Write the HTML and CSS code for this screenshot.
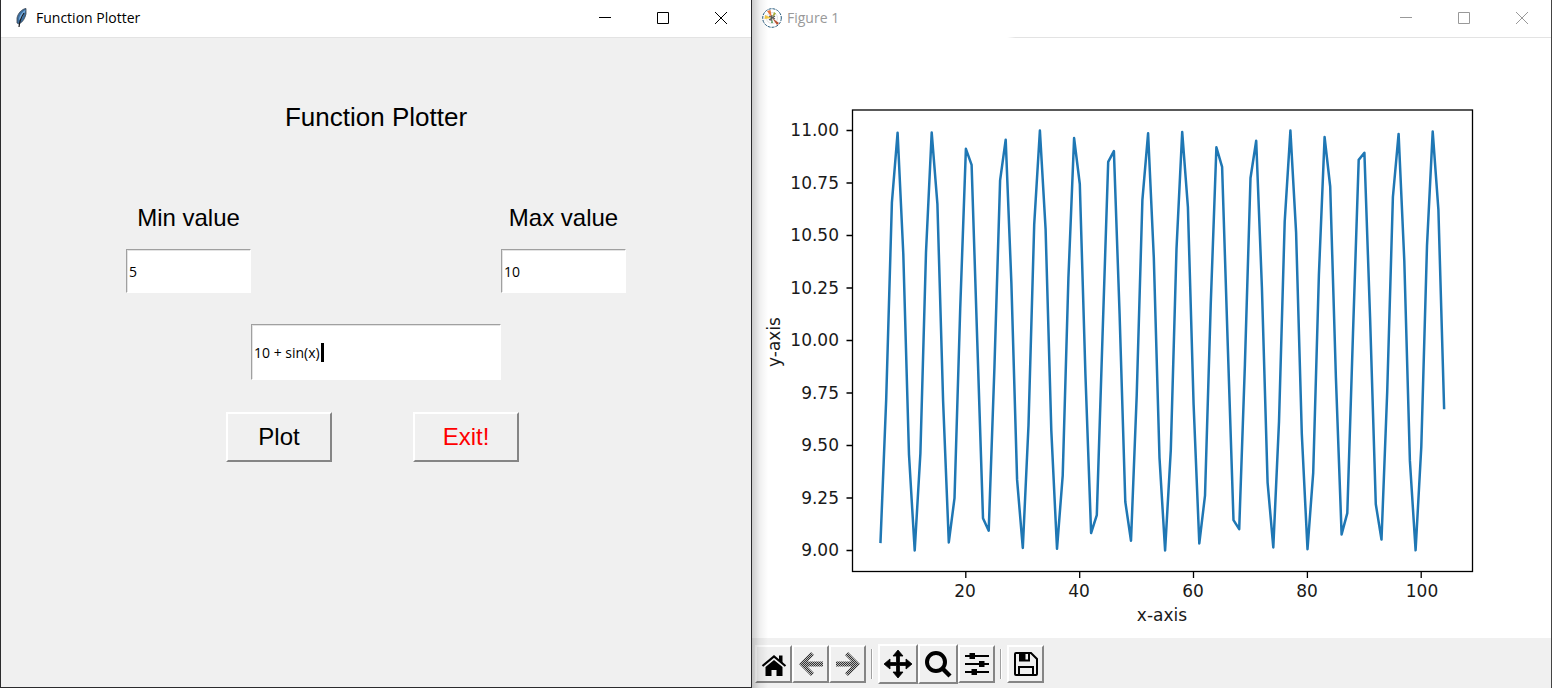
FILE: index.html
```html
<!DOCTYPE html>
<html lang="en">
<head>
<meta charset="utf-8">
<title>Function Plotter</title>
<link rel="stylesheet" href="styles.css">
</head>
<body>
<main class="desktop">
  <section class="window window-form">
    <header class="titlebar">
      <svg class="app-icon" viewBox="0 0 20 20" aria-hidden="true">
        <path d="M15 .5C11 1 7 5 6 10L6 15L8 16C12 14 14 10 15 6Z" fill="#3d6f9f" stroke="#3a4450" stroke-width=".8"/>
        <path d="M14.500 2C11 4 8 8 8 12L11 10L13.500 5Z" fill="#78aee2"/>
        <path d="M13 5C11 8 8.500 12 8 19" fill="none" stroke="#17191d" stroke-width="1.200"/>
      </svg>
      <h2 class="caption">Function Plotter</h2>
      <div class="controls">
        <button class="control" aria-label="Minimize"><svg viewBox="0 0 12 12"><path d="M0 5.500H12"/></svg></button>
        <button class="control" aria-label="Maximize"><svg viewBox="0 0 12 12"><path d="M.5 .5H11.500V11.500H.5Z"/></svg></button>
        <button class="control" aria-label="Close"><svg viewBox="0 0 12 12"><path d="M0 0L12 12M12 0L0 12"/></svg></button>
      </div>
    </header>
    <form class="form" onsubmit="return false">
      <h1 class="heading">Function Plotter</h1>
      <div class="field field-min">
        <label for="min">Min value</label>
        <input class="entry" id="min" type="text" value="5">
      </div>
      <div class="field field-max">
        <label for="max">Max value</label>
        <input class="entry" id="max" type="text" value="10">
      </div>
      <div class="field-function">
        <input class="entry entry-tall" type="text" value="10 + sin(x)" aria-label="Function">
        <span class="caret"></span>
      </div>
      <div class="actions">
        <button class="push" type="submit">Plot</button>
        <button class="push push-exit" type="button">Exit!</button>
      </div>
    </form>
  </section>

  <section class="window window-figure">
    <header class="titlebar inactive">
      <svg class="app-icon" viewBox="0 0 20 20" aria-hidden="true">
        <circle cx="10" cy="10" r="9.300" fill="#fff" stroke="#285b7d" stroke-width="1" stroke-dasharray="3 1"/>
        <circle cx="10" cy="10" r="5.500" fill="none" stroke="#ccc" stroke-width=".6"/>
        <path d="M10 10L5 3L8.500 2Z" fill="#e8743b"/>
        <path d="M10 10L2.500 11L3 7Z" fill="#f2c744"/>
        <path d="M10 10L15 17L17 15Z" fill="#b65131"/>
        <path d="M10 10L12 4L14 5.500Z" fill="#a5ad34"/>
        <path d="M10 10L9 15L11 15Z" fill="#5c9b65"/>
        <path d="M7 8L13 11M10 7L9 13M13 8L7 12" stroke="#555" stroke-width="1.200"/>
      </svg>
      <h2 class="caption">Figure 1</h2>
      <div class="controls">
        <button class="control" aria-label="Minimize"><svg viewBox="0 0 12 12"><path d="M0 5.500H12"/></svg></button>
        <button class="control" aria-label="Maximize"><svg viewBox="0 0 12 12"><path d="M.5 .5H11.500V11.500H.5Z"/></svg></button>
        <button class="control" aria-label="Close"><svg viewBox="0 0 12 12"><path d="M0 0L12 12M12 0L0 12"/></svg></button>
      </div>
    </header>
    <svg class="chart" viewBox="0 0 799 600" role="img" aria-label="Plot of 10 + sin(x)">
      <polyline class="curve" id="curve"/>
      <rect class="frame" x="100.500" y="72" width="620" height="461.500"/>
      <path class="frame" d="M94.500 92.500H100M94.500 145H100M94.500 197.500H100M94.500 250H100M94.500 302.500H100M94.500 355H100M94.500 407.500H100M94.500 460H100M94.500 512.500H100M213.800 534V540M327.700 534V540M441.500 534V540M555.400 534V540M669.200 534V540"/>
      <g class="tick-y">
        <text x="87" y="98">11.00</text>
        <text x="87" y="151">10.75</text>
        <text x="87" y="203">10.50</text>
        <text x="87" y="256">10.25</text>
        <text x="87" y="308">10.00</text>
        <text x="87" y="361">9.75</text>
        <text x="87" y="413">9.50</text>
        <text x="87" y="466">9.25</text>
        <text x="87" y="518">9.00</text>
      </g>
      <g class="tick-x">
        <text x="213" y="559">20</text>
        <text x="327" y="559">40</text>
        <text x="441" y="559">60</text>
        <text x="555" y="559">80</text>
        <text x="670" y="559">100</text>
        <text x="410" y="583">x-axis</text>
        <text transform="translate(28 304) rotate(-90)">y-axis</text>
      </g>
    </svg>
    <nav class="toolbar" aria-label="Figure tools">
      <button class="tool" aria-label="Home"><svg viewBox="0 0 26 26">
        <path d="M1.500 15L13 5.500L24.500 15" fill="none" stroke="#000" stroke-width="2.200"/>
        <path d="M18 4.500H21.500V12L18 9Z"/>
        <path d="M4.500 16L13 9L21.500 16V25H15.500V19H10.500V25H4.500Z"/>
      </svg></button>
      <button class="tool" aria-label="Back"><svg viewBox="0 0 26 26">
        <defs><pattern id="dots" width="2" height="2" patternUnits="userSpaceOnUse"><rect width="2" height="2" fill="#bbb"/><rect width="1" height="1" fill="#333"/><rect x="1" y="1" width="1" height="1" fill="#333"/></pattern></defs>
        <path d="M1 13L13 1L16 4L9.500 10.500H25V15.500H9.500L16 22L13 25Z" fill="url(#dots)"/>
      </svg></button>
      <button class="tool" aria-label="Forward"><svg viewBox="0 0 26 26">
        <path d="M25 13L13 1L10 4L16.500 10.500H1V15.500H16.500L10 22L13 25Z" fill="url(#dots)"/>
      </svg></button>
      <span class="divider"></span>
      <button class="tool tool-large" aria-label="Pan"><svg viewBox="0 0 28 28">
        <path d="M14 0L19 6H15.500V12.500H22V9L28 14L22 19V15.500H15.500V22H19L14 28L9 22H12.500V15.500H6V19L0 14L6 9V12.500H12.500V6H9Z" stroke="#000" stroke-width=".8" stroke-linejoin="round"/>
      </svg></button>
      <button class="tool tool-large" aria-label="Zoom"><svg viewBox="0 0 28 28">
        <circle cx="12" cy="12" r="9" fill="none" stroke="#000" stroke-width="4"/>
        <path d="M18 18L26 26" stroke="#000" stroke-width="4.500"/>
      </svg></button>
      <button class="tool" aria-label="Configure subplots"><svg viewBox="0 0 26 26">
        <path d="M1 5H25M1 13H25M1 21H25" stroke="#000" stroke-width="2"/>
        <path d="M5.500 2H11V8H5.500ZM15 10H20.500V16H15ZM7.500 18H13V24H7.500Z"/>
      </svg></button>
      <span class="divider"></span>
      <button class="tool" aria-label="Save"><svg viewBox="0 0 26 26">
        <path d="M2 3Q2 2 3 2H18L24 8V23Q24 24 23 24H3Q2 24 2 23Z" fill="none" stroke="#000" stroke-width="2"/>
        <path d="M6 2H17V10.500H6Z"/>
        <path d="M12.500 3H15V8.500H12.500Z" fill="#f0f0f0"/>
        <path d="M6 24V16H20V24" fill="none" stroke="#000" stroke-width="2"/>
      </svg></button>
    </nav>
  </section>
</main>
<script src="plot.js"></script>
</body>
</html>
```
FILE: styles.css
```css
* {
  box-sizing: border-box;
}

body {
  margin: 0;
  background: #f0f0f0;
  color: #000;
  font-family: "Liberation Sans", Arial, sans-serif;
}

button,
input {
  margin: 0;
  color: inherit;
  font: inherit;
}

.desktop {
  display: grid;
  grid-template-columns: 47fr 50fr;
  min-height: 100vh;
}

.window {
  display: flex;
  flex-direction: column;
  min-width: 0;
}

.window-form {
  background: #f0f0f0;
  border: solid #2b2b2d;
  border-width: 0 1px 1px;
}

.window-figure {
  position: relative;
  background: #fff;
  border-right: 1px solid #444;
}

/* Shadow cast by the window in front */
.window-figure::before {
  content: "";
  position: absolute;
  inset: 0 auto 0 0;
  width: 16px;
  background: linear-gradient(to right, rgb(0 0 0 / 20%), rgb(0 0 0 / 6%) 50%, transparent);
  pointer-events: none;
}

.titlebar {
  display: flex;
  flex: none;
  align-items: center;
  height: 38px;
  padding: 0 24px 2px 10px;
  background: #fff;
  border-bottom: 1px solid #e3e3e3;
}

.inactive {
  padding-right: 23px;
  border-image: linear-gradient(to right, #fff 32%, #e3e3e3 33%) 1;
  color: #999;
}

.app-icon {
  width: 20px;
  height: 20px;
}

.caption {
  margin: 0 auto 0 5px;
  font: 400 14px/20px "Open Sans", "Noto Sans", sans-serif;
}

.controls {
  display: flex;
  gap: 46px;
}

.control {
  display: block;
  width: 12px;
  height: 12px;
  padding: 0;
  border: 0;
  background: none;
}

.control svg {
  display: block;
  width: 12px;
  height: 12px;
  fill: none;
  stroke: currentColor;
}

.form {
  display: grid;
  grid-template-columns: repeat(6, 1fr);
  padding-top: 64px;
}

.heading {
  grid-column: 1 / -1;
  margin: 0 0 70px;
  font-size: 26px;
  font-weight: 400;
  line-height: 30px;
  text-align: center;
}

.field {
  display: flex;
  flex-direction: column;
  gap: 15px;
  font-size: 24px;
  line-height: 32px;
  text-align: center;
}

.field-min {
  grid-column: 2;
}

.field-max {
  grid-column: 5;
}

.field label {
  white-space: nowrap;
}

.entry {
  width: 100%;
  height: 44px;
  padding: 0 2px;
  border: 1px solid;
  border-color: #a0a0a0 #fff #fff #a0a0a0;
  border-radius: 0;
  outline: 0;
  background: #fff;
  box-shadow: inset 1px 1px #e3e3e3;
  font: 14px/20px "Open Sans", "Noto Sans", sans-serif;
}

.field-function {
  position: relative;
  grid-column: 3 / 5;
  margin-top: 31px;
}

.entry-tall {
  display: block;
  height: 56px;
}

.caret {
  position: absolute;
  top: 19px;
  left: 70px;
  width: 3px;
  height: 19px;
  background: #000;
}

.actions {
  display: flex;
  grid-column: 1 / -1;
  gap: 81px;
  margin-top: 32px;
  padding-left: 30%;
}

.push {
  width: 106px;
  height: 50px;
  padding: 0;
  border: 2px solid;
  border-color: #fff #858585 #858585 #fff;
  background: #f0f0f0;
  font-size: 24px;
}

.push-exit {
  color: #f00;
}

.chart {
  display: block;
  width: 100%;
  font: 17px "DejaVu Sans", sans-serif;
  fill: #1a1a1a;
}

.curve {
  fill: none;
  stroke: #1f77b4;
  stroke-width: 2.5px;
  stroke-linejoin: round;
  stroke-linecap: square;
}

.frame {
  fill: none;
  stroke: #000;
  stroke-width: 1.3px;
}

.tick-y {
  text-anchor: end;
}

.tick-x {
  text-anchor: middle;
}

.toolbar {
  display: flex;
  flex: 1;
  align-items: center;
  min-height: 50px;
  padding: 2px 3px 0;
  background: #f0f0f0;
}

.tool {
  display: grid;
  flex: none;
  place-items: center;
  width: 37px;
  height: 38px;
  padding: 0;
  border: 2px solid;
  border-color: #fff #858585 #858585 #fff;
  background: #f0f0f0;
}

.tool svg {
  width: 26px;
  height: 26px;
}

.tool-large {
  width: 40px;
  height: 40px;
}

.tool-large svg {
  width: 28px;
  height: 28px;
}

.divider {
  width: 2px;
  height: 30px;
  margin: 0 5px;
  border-left: 1px solid #a0a0a0;
  border-right: 1px solid #fff;
}
```
FILE: plot.js
```js
// Samples 10 + sin(x) at whole numbers and maps them to chart coordinates.
const first = 5;
const last = 104;
const points = [];

for (let x = first; x <= last; x += 1) {
  const y = 10 + Math.sin(x);
  const px = 128.5 + (x - first) * 5.693;
  const py = 512.5 - (y - 9) * 210;
  points.push(`${px.toFixed(1)},${py.toFixed(1)}`);
}

document.getElementById("curve").setAttribute("points", points.join(" "));
```
